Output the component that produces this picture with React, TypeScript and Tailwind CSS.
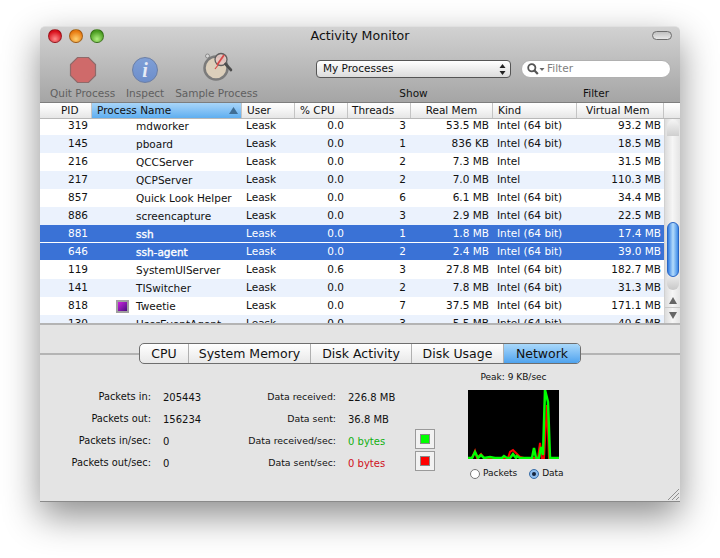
import { ReactNode } from 'react'

type Proc = {
  pid: number
  name: string
  cpu: string
  threads: number
  real: string
  kind: string
  virt: string
  selected?: boolean
  icon?: boolean
}

const procs: Proc[] = [
  { pid: 319, name: 'mdworker', cpu: '0.0', threads: 3, real: '53.5 MB', kind: 'Intel (64 bit)', virt: '93.2 MB' },
  { pid: 145, name: 'pboard', cpu: '0.0', threads: 1, real: '836 KB', kind: 'Intel (64 bit)', virt: '18.5 MB' },
  { pid: 216, name: 'QCCServer', cpu: '0.0', threads: 2, real: '7.3 MB', kind: 'Intel', virt: '31.5 MB' },
  { pid: 217, name: 'QCPServer', cpu: '0.0', threads: 2, real: '7.0 MB', kind: 'Intel', virt: '110.3 MB' },
  { pid: 857, name: 'Quick Look Helper', cpu: '0.0', threads: 6, real: '6.1 MB', kind: 'Intel (64 bit)', virt: '34.4 MB' },
  { pid: 886, name: 'screencapture', cpu: '0.0', threads: 3, real: '2.9 MB', kind: 'Intel (64 bit)', virt: '22.5 MB' },
  { pid: 881, name: 'ssh', cpu: '0.0', threads: 1, real: '1.8 MB', kind: 'Intel (64 bit)', virt: '17.4 MB', selected: true },
  { pid: 646, name: 'ssh-agent', cpu: '0.0', threads: 2, real: '2.4 MB', kind: 'Intel (64 bit)', virt: '39.0 MB', selected: true },
  { pid: 119, name: 'SystemUIServer', cpu: '0.6', threads: 3, real: '27.8 MB', kind: 'Intel (64 bit)', virt: '182.7 MB' },
  { pid: 141, name: 'TISwitcher', cpu: '0.0', threads: 2, real: '7.8 MB', kind: 'Intel (64 bit)', virt: '31.3 MB' },
  { pid: 818, name: 'Tweetie', cpu: '0.0', threads: 7, real: '37.5 MB', kind: 'Intel (64 bit)', virt: '171.1 MB', icon: true },
  { pid: 130, name: 'UserEventAgent', cpu: '0.0', threads: 3, real: '5.5 MB', kind: 'Intel (64 bit)', virt: '40.6 MB' },
]

const cols = 'grid grid-cols-[52px_150px_53px_53px_63px_82px_84px_87px]'

function TrafficLight({ color }: { color: string }) {
  return (
    <div className={`w-[14px] h-[14px] rounded-full border border-black/30 ${color}`} />
  )
}

function ToolButton({ label, children }: { label: string; children: ReactNode }) {
  return (
    <div className="flex flex-col items-center">
      <div className="h-[32px] flex items-center justify-center">{children}</div>
      <span className="text-[#5f5f5f] leading-[14px]">{label}</span>
    </div>
  )
}

function HeaderCell({ label, pad = 'px-[5px]', align = 'left', active }: { label: string; pad?: string; align?: 'left' | 'center'; active?: boolean }) {
  return (
    <div
      className={`relative h-[15px] leading-[15px] border-r border-[#c4c4c4] ${pad} ${align === 'center' ? 'text-center' : ''} ${
        active ? 'bg-gradient-to-b from-[#a8d5f8] to-[#5eaef0] border-[#4f8fcb]' : ''
      }`}
    >
      {label}
      {active && (
        <svg className="absolute right-[3px] top-[4px]" width="9" height="7" viewBox="0 0 9 7">
          <path d="M4.5 0 L9 7 L0 7 Z" fill="#3f6d94" />
        </svg>
      )}
    </div>
  )
}

function ProcRow({ p, index }: { p: Proc; index: number }) {
  const bg = p.selected ? 'bg-[#3a72d6] text-white' : index % 2 === 1 ? 'bg-[#ebf2fd]' : 'bg-white'
  return (
    <div className={`${cols} h-[18px] leading-[16px] ${p.selected ? 'border-b border-white' : ''} ${bg}`}>
      <div className="text-right pr-[4px]">{p.pid}</div>
      <div className={`flex items-center pl-[24px] ${p.selected ? '[-webkit-text-stroke:0.35px_white]' : ''}`}>
        <div className="w-[20px] flex justify-start">
          {p.icon && (
            <div className="w-[13px] h-[13px] bg-[#a0a0a0] p-[2px]">
              <div className="w-full h-full bg-gradient-to-br from-[#d020e0] to-[#4a0a80]" />
            </div>
          )}
        </div>
        <span>{p.name}</span>
      </div>
      <div className="pl-[4px]">Leask</div>
      <div className="text-right pr-[4px]">{p.cpu}</div>
      <div className="text-right pr-[5px]">{p.threads}</div>
      <div className="text-right pr-[4px]">{p.real}</div>
      <div className="pl-[4px]">{p.kind}</div>
      <div className="text-right pr-[3px]">{p.virt}</div>
    </div>
  )
}

function Scrollbar() {
  return (
    <div className="w-[16px] h-full flex flex-col items-center bg-gradient-to-r from-[#dcdcdc] via-[#f6f6f6] to-[#e4e4e4] border-l border-[#d0d0d0]">
      <div className="w-[12px] h-[16px] mt-[1px] rounded-t-full bg-gradient-to-b from-[#f4f4f4] to-[#cfcfcf]" />
      <div className="mt-[86px] w-[12px] h-[55px] rounded-full border border-[#2a66c4] bg-gradient-to-r from-[#2f7be0] via-[#b4dcfb] to-[#3b8ae6]" />
      <div className="w-[12px] h-[13px] rounded-b-full bg-gradient-to-b from-[#e8e8e8] to-[#c8c8c8]" />
      <div className="mt-auto w-full h-[30px] flex flex-col items-center">
        <div className="h-[15px] flex items-center border-b border-[#c8c8c8] w-full justify-center">
          <svg width="8" height="7" viewBox="0 0 8 7"><path d="M4 0 L8 7 L0 7 Z" fill="#666" /></svg>
        </div>
        <div className="h-[15px] flex items-center justify-center">
          <svg width="8" height="7" viewBox="0 0 8 7"><path d="M0 0 L8 0 L4 7 Z" fill="#666" /></svg>
        </div>
      </div>
    </div>
  )
}

function SampleIcon() {
  return (
    <svg width="32" height="32" viewBox="0 0 32 32" className="-mt-[6px] ml-[4px]">
      <circle cx="5.5" cy="5" r="2" fill="#d8d8d8" stroke="#8a8a8a" />
      <circle cx="14" cy="17" r="11.5" fill="#dccfbb" stroke="#7b7b7b" strokeWidth="2.5" />
      <path d="M13 18 L24 4" stroke="#d84a4a" strokeWidth="1.2" />
      <circle cx="19" cy="8.5" r="6" fill="#e6c8c2" fillOpacity="0.9" stroke="#5e5e5e" strokeWidth="1.3" />
      <path d="M22 4 L15 14" stroke="#d84a4a" strokeWidth="1.8" />
      <path d="M23.5 13 L29 19" stroke="#4d4d4d" strokeWidth="2.6" strokeLinecap="round" />
    </svg>
  )
}

function StatRow({ label, value, labelClass, valueClass = '' }: { label: string; value: string; labelClass: string; valueClass?: string }) {
  return (
    <div className="flex h-[22px] items-center">
      <div className={`${labelClass} text-right`}>{label}</div>
      <div className={`ml-[12px] text-[10px] ${valueClass}`}>{value}</div>
    </div>
  )
}

function Swatch({ color }: { color: string }) {
  return (
    <div className="w-[20px] h-[20px] border border-[#9a9a9a] bg-[#f2f2f2] flex items-center justify-center">
      <div className={`w-[10px] h-[10px] border border-[#888] ${color}`} />
    </div>
  )
}

const tabs = [
  { label: 'CPU', w: 'w-[49px]' },
  { label: 'System Memory', w: 'w-[122px]' },
  { label: 'Disk Activity', w: 'w-[101px]' },
  { label: 'Disk Usage', w: 'w-[92px]' },
]

const packetLabel = 'w-[111px] text-[9.8px]'
const dataLabel = 'w-[110px] text-[9.4px]'

export default function App() {
  return (
    <div className="w-[720px] h-[558px] bg-white pl-[40px] pt-[26px] overflow-hidden font-['DejaVu_Sans',sans-serif] text-[10.5px] text-[#111]">
      <div className="w-[640px] h-[476px] flex flex-col rounded-t-[5px] shadow-[0_14px_36px_rgba(0,0,0,0.45)] border-b border-[#8a8a8a]">
        {/* title bar + toolbar */}
        <div className="h-[76px] rounded-t-[5px] bg-gradient-to-b from-[#d2d2d2] to-[#a5a5a5] border-t border-[#e0e0e0]">
          <div className="relative h-[18px] flex items-center justify-center">
            <div className="absolute left-[8px] top-[2px] flex gap-[7px]">
              <TrafficLight color="bg-[radial-gradient(circle_at_50%_75%,#ff8a8a,#d8101c_70%)]" />
              <TrafficLight color="bg-[radial-gradient(circle_at_50%_75%,#ffd070,#e87a10_70%)]" />
              <TrafficLight color="bg-[radial-gradient(circle_at_50%_75%,#b0f080,#4a9c20_70%)]" />
            </div>
            <span className="text-[12.6px] text-[#111]">Activity Monitor</span>
            <div className="absolute left-[612px] top-[4px] w-[20px] h-[9px] rounded-full border border-[#6d6d6d] bg-gradient-to-b from-[#c0c0c0] to-[#e8e8e8]" />
          </div>
          <div className="flex pl-[10px] mt-[9px]">
            <div className="flex gap-[10px] w-[266px]">
              <ToolButton label="Quit Process">
                <svg width="28" height="28" viewBox="0 0 28 28">
                  <path d="M8.5 1.5 H19.5 L26.5 8.5 V19.5 L19.5 26.5 H8.5 L1.5 19.5 V8.5 Z" fill="#cf6a6a" stroke="#8e6a6a" strokeWidth="1.2" />
                </svg>
              </ToolButton>
              <ToolButton label="Inspect">
                <div className="w-[26px] h-[26px] mx-[7px] rounded-full bg-gradient-to-b from-[#7f9fd6] to-[#6d8ecb] border border-[#6a7ea6] flex items-center justify-center">
                  <span className="font-['Liberation_Serif',serif] italic font-bold text-[20px] leading-none text-[#e6ecf6]">i</span>
                </div>
              </ToolButton>
              <ToolButton label="Sample Process">
                <SampleIcon />
              </ToolButton>
            </div>
            <div className="w-[195px] flex flex-col items-center">
              <div className="w-full h-[18px] mt-[6px] rounded-[4px] border border-[#555] bg-gradient-to-b from-white to-[#dcdcdc] flex items-center justify-between pl-[6px] pr-[4px]">
                <span>My Processes</span>
                <svg width="7" height="11" viewBox="0 0 7 11">
                  <path d="M3.5 0 L6.5 4 H0.5 Z M3.5 11 L0.5 7 H6.5 Z" fill="#222" />
                </svg>
              </div>
              <span className="mt-[8px] leading-[14px]">Show</span>
            </div>
            <div className="ml-[10px] w-[150px] flex flex-col items-center">
              <div className="w-full h-[18px] mt-[6px] rounded-full bg-white border border-[#b0b0b0] flex items-center pl-[5px]">
                <svg width="18" height="12" viewBox="0 0 18 12">
                  <circle cx="4.8" cy="4.8" r="3.6" fill="none" stroke="#555" strokeWidth="1.8" />
                  <path d="M7.5 7.5 L10.8 11" stroke="#555" strokeWidth="2.2" />
                  <path d="M12.5 5 H17.5 L15 8 Z" fill="#666" />
                </svg>
                <span className="ml-[2px] text-[#808080]">Filter</span>
              </div>
              <span className="mt-[8px] leading-[14px]">Filter</span>
            </div>
          </div>
        </div>

        {/* table */}
        <div className="h-[16px] flex border-t border-[#7d7d7d] bg-gradient-to-b from-white via-[#f4f4f4] to-[#e6e6e6]">
          <div className={`${cols} w-[624px]`}>
            <HeaderCell label="PID" pad="pl-[21px]" />
            <HeaderCell label="Process Name" active />
            <HeaderCell label="User" />
            <HeaderCell label="% CPU" />
            <HeaderCell label="Threads" pad="pl-[4px]" />
            <HeaderCell label="Real Mem" align="center" />
            <HeaderCell label="Kind" />
            <HeaderCell label="Virtual Mem" pad="pl-[9px]" />
          </div>
        </div>
        <div className="h-[207px] flex overflow-hidden border-t border-[#b8b8b8] border-b-2 border-b-[#b4b4b4]">
          <div className="w-[624px] -mt-[2px] bg-white">
            {procs.map((p, i) => (
              <ProcRow key={p.pid} p={p} index={i} />
            ))}
          </div>
          <Scrollbar />
        </div>

        {/* detail panel */}
        <div className="relative flex-1 bg-[#e4e4e4]">
          <div className="absolute left-0 right-0 top-[28px] h-[2px] bg-[#b4b4b4]" />
          <div className="relative ml-[99px] mt-[18px] w-[442px] h-[21px] flex rounded-[5px] border border-[#6e6e6e] bg-gradient-to-b from-white to-[#e8e8e8] text-[12.5px] leading-[19px] overflow-hidden">
            {tabs.map(t => (
              <div key={t.label} className={`${t.w} text-center border-r border-[#b0b0b0]`}>{t.label}</div>
            ))}
            <div className="flex-1 text-center bg-gradient-to-b from-[#a9d8fa] to-[#4ea3ee]">Network</div>
          </div>

          <div className="flex mt-[22px]">
            <div className="w-[186px]">
              <StatRow labelClass={packetLabel} label="Packets in:" value="205443" />
              <StatRow labelClass={packetLabel} label="Packets out:" value="156234" />
              <StatRow labelClass={packetLabel} label="Packets in/sec:" value="0" />
              <StatRow labelClass={packetLabel} label="Packets out/sec:" value="0" />
            </div>
            <div className="w-[242px] relative">
              <StatRow labelClass={dataLabel} label="Data received:" value="226.8 MB" />
              <StatRow labelClass={dataLabel} label="Data sent:" value="36.8 MB" />
              <StatRow labelClass={dataLabel} label="Data received/sec:" value="0 bytes" valueClass="text-[#10b010]" />
              <StatRow labelClass={dataLabel} label="Data sent/sec:" value="0 bytes" valueClass="text-[#d01020]" />
              <div className="absolute left-[189px] top-[43px] flex flex-col gap-[2px]">
                <Swatch color="bg-[#00ff00]" />
                <Swatch color="bg-[#ff0000]" />
              </div>
            </div>
            <div className="w-[91px] -mt-[16px] flex flex-col items-center">
              <div className="leading-[14px] text-[9px] whitespace-nowrap">Peak: 9 KB/sec</div>
              <svg width="91" height="69" viewBox="0 0 91 69" className="mt-[6px] bg-black block shrink-0">
                <polyline
                  fill="none"
                  stroke="#ff0000"
                  strokeWidth="2"
                  points="4,68 7,61 9,68 13,64 16,68 40,68 42,62 45,60 48,63 52,67 56,68 70,68 72,53 74,68 76,68 79,15 81,68 91,68"
                />
                <polyline
                  fill="none"
                  stroke="#00ff00"
                  strokeWidth="2.5"
                  points="0,68 4,68 7,62 10,68 13,65 16,68 22,67 27,68 34,68 36,66 39,68 42,68 45,64 48,68 49,66 52,68 64,68 66,58 68,68 71,68 73,57 75,65 77,0 80,12 82,68 91,68"
                />
              </svg>
              <div className="mt-[8px] self-start ml-[2px] flex items-center gap-[12px] text-[9px] whitespace-nowrap">
                <div className="flex items-center gap-[3px]">
                  <div className="w-[10px] h-[10px] rounded-full border border-[#777] bg-white" />
                  <span>Packets</span>
                </div>
                <div className="flex items-center gap-[3px]">
                  <div className="w-[10px] h-[10px] rounded-full border border-[#3a6ea8] bg-[#8ebcec] flex items-center justify-center">
                    <div className="w-[4px] h-[4px] rounded-full bg-[#14233c]" />
                  </div>
                  <span>Data</span>
                </div>
              </div>
            </div>
          </div>

          <svg className="absolute right-[1px] bottom-[1px]" width="11" height="11" viewBox="0 0 11 11">
            <path d="M0 11 L11 0 M4 11 L11 4 M8 11 L11 8" stroke="#8f8f8f" strokeWidth="1" />
          </svg>
        </div>
      </div>
    </div>
  )
}
